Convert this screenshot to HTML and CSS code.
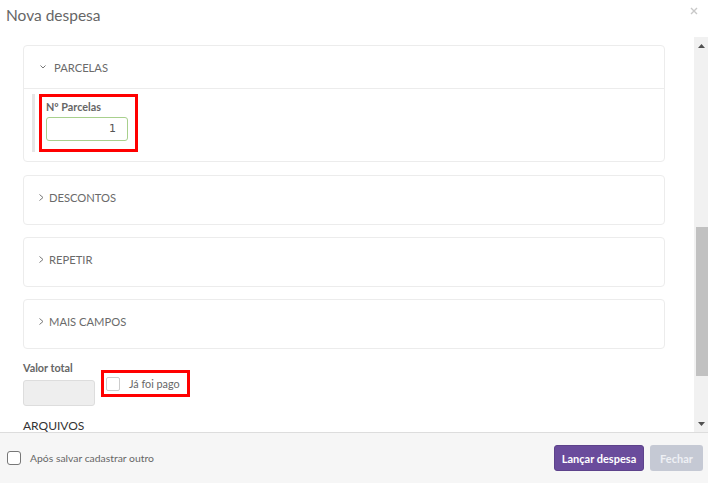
FILE: index.html
```
<!DOCTYPE html>
<html lang="pt">
<head>
<meta charset="utf-8">
<link rel="stylesheet" href="styles.css">
</head>
<body>
<div class="modal">
  <div class="modal-header">
    <h1 class="title">Nova despesa</h1>
    <svg class="close" width="8" height="8" viewBox="0 0 8 8"><path d="M1 1L7 7M7 1L1 7" stroke="#c8c8c8" stroke-width="1.4"/></svg>
  </div>
  <div class="modal-main">
    <div class="scroll-content">
      <div class="card card-open">
        <div class="card-head">
          <svg class="chev" width="6" height="4" viewBox="0 0 6 4"><polyline points="0.5,0.5 3,3 5.5,0.5" fill="none" stroke="#777" stroke-width="1"/></svg>
          <span class="card-title">PARCELAS</span>
        </div>
        <div class="card-body">
          <div class="field-wrap">
            <div class="highlight hl-parcelas">
              <label class="field-label">Nº Parcelas</label>
              <div class="input input-green">1</div>
            </div>
          </div>
        </div>
      </div>
      <div class="card">
        <div class="card-head card-head-closed">
          <svg class="chev" width="5" height="7" viewBox="0 0 5 7"><polyline points="0.5,0.5 4,3.5 0.5,6.5" fill="none" stroke="#777" stroke-width="1"/></svg>
          <span class="card-title">DESCONTOS</span>
        </div>
      </div>
      <div class="card">
        <div class="card-head card-head-closed">
          <svg class="chev" width="5" height="7" viewBox="0 0 5 7"><polyline points="0.5,0.5 4,3.5 0.5,6.5" fill="none" stroke="#777" stroke-width="1"/></svg>
          <span class="card-title">REPETIR</span>
        </div>
      </div>
      <div class="card">
        <div class="card-head card-head-closed">
          <svg class="chev" width="5" height="7" viewBox="0 0 5 7"><polyline points="0.5,0.5 4,3.5 0.5,6.5" fill="none" stroke="#777" stroke-width="1"/></svg>
          <span class="card-title">MAIS CAMPOS</span>
        </div>
      </div>
      <div class="total-row">
        <div class="total-group">
          <label class="field-label">Valor total</label>
          <div class="input input-disabled"></div>
        </div>
        <div class="highlight hl-pago">
          <span class="checkbox"></span>
          <span class="check-text">Já foi pago</span>
        </div>
      </div>
      <div class="section-title">ARQUIVOS</div>
    </div>
    <div class="scrollbar">
      <div class="sb-btn"><svg width="7" height="4" viewBox="0 0 7 4"><polygon points="0,4 3.5,0 7,4" fill="#505050"/></svg></div>
      <div class="sb-track">
        <div class="sb-space-top"></div>
        <div class="sb-thumb"></div>
      </div>
      <div class="sb-btn"><svg width="7" height="4" viewBox="0 0 7 4"><polygon points="0,0 7,0 3.5,4" fill="#505050"/></svg></div>
    </div>
  </div>
  <div class="modal-footer">
    <div class="footer-check">
      <span class="checkbox checkbox-dark"></span>
      <span class="footer-text">Após salvar cadastrar outro</span>
    </div>
    <div class="buttons">
      <button class="btn btn-primary">Lançar despesa</button>
      <button class="btn btn-disabled">Fechar</button>
    </div>
  </div>
</div>
</body>
</html>
```
FILE: styles.css
```
* { box-sizing: border-box; }
html, body { margin: 0; padding: 0; }
body {
  font-family: Lato, "Open Sans", sans-serif;
  background: #fff;
  width: 708px;
  height: 483px;
  overflow: hidden;
}
.modal {
  display: flex;
  flex-direction: column;
  height: 483px;
}
.modal-header {
  height: 37px;
  flex: none;
  display: flex;
  justify-content: space-between;
  align-items: flex-start;
  padding: 0 10px 0 6px;
}
.title {
  margin: 6px 0 0;
  font-size: 15.5px;
  font-weight: 400;
  color: #666;
  line-height: 18px;
}
.close { margin-top: 7px; }
.modal-main {
  height: 395px;
  flex: none;
  display: flex;
}
.scroll-content {
  flex: 1;
  overflow: hidden;
  padding: 8px 29px 0 23px;
}
.card {
  border: 1px solid #ececec;
  border-radius: 4px;
  margin-bottom: 12px;
}
.card-open { margin-bottom: 13px; }
.card-head {
  height: 43px;
  display: flex;
  align-items: center;
  padding-left: 16px;
  border-bottom: 1px solid #ececec;
}
.card-head-closed {
  height: 48px;
  border-bottom: none;
  padding-left: 15px;
  padding-bottom: 5px;
}
.chev { flex: none; }
.card-title {
  font-size: 11.2px;
  color: #6a6a6a;
  margin-left: 8px;
}
.card-head-closed .card-title { margin-left: 5px; }
.card-body {
  padding: 8px 8px 9px;
}
.field-wrap {
  border-left: 3px solid #e6e6e6;
  padding-left: 4px;
  height: 58px;
}
.highlight {
  border: 3px solid #f00;
}
.hl-parcelas {
  width: 99px;
  margin-top: -3px;
  padding: 3px 7px 8px 4px;
  display: flex;
  flex-direction: column;
  gap: 4px;
}
.field-label {
  font-size: 10.8px;
  font-weight: 700;
  color: #666;
  line-height: 13px;
  display: block;
}
.input {
  height: 24px;
  border-radius: 3px;
  font-size: 11px;
  color: #555;
  font-family: "DejaVu Sans", sans-serif;
}
.input-green {
  width: 82px;
  border: 1px solid #a8d08d;
  text-align: right;
  padding-right: 11px;
  line-height: 22px;
}
.total-row {
  display: flex;
  align-items: flex-start;
  margin-top: 12px;
}
.total-group {
  display: flex;
  flex-direction: column;
  gap: 6px;
}
.input-disabled {
  width: 72px;
  height: 26px;
  background: #eee;
  border: 1px solid #ddd;
}
.hl-pago {
  margin-left: 6px;
  margin-top: 9px;
  width: 89px;
  height: 27px;
  display: flex;
  align-items: center;
  padding-left: 2px;
}
.checkbox {
  width: 14px;
  height: 14px;
  border: 1px solid #ccc;
  border-radius: 2px;
  background: #fff;
  flex: none;
  display: inline-block;
}
.check-text {
  font-size: 10.8px;
  color: #666;
  margin-left: 9px;
  margin-top: -1px;
}
.section-title {
  margin-top: 12px;
  font-size: 12px;
  color: #333;
}
.scrollbar {
  width: 14px;
  flex: none;
  background: #f1f1f1;
  display: flex;
  flex-direction: column;
}
.sb-btn {
  height: 17px;
  display: flex;
  align-items: center;
  justify-content: center;
  padding-left: 1px;
  flex: none;
}
.sb-track {
  flex: 1;
  display: flex;
  flex-direction: column;
}
.sb-space-top { height: 173px; }
.sb-thumb {
  height: 149px;
  margin-left: 2px;
  background: #c1c1c1;
}
.modal-footer {
  flex: 1;
  background: #f6f6f6;
  border-top: 1px solid #ddd;
  display: flex;
  align-items: center;
  justify-content: space-between;
  padding: 0 5px 0 7px;
}
.footer-check {
  display: flex;
  align-items: center;
}
.checkbox-dark {
  border-color: #777;
  border-radius: 3px;
}
.footer-text {
  font-size: 10.4px;
  color: #666;
  margin-left: 9px;
}
.buttons {
  display: flex;
  gap: 6px;
}
.btn {
  height: 26px;
  border: none;
  border-radius: 3px;
  font-family: Lato, sans-serif;
  font-size: 11px;
  font-weight: 700;
  padding: 0;
}
.btn-primary {
  width: 90px;
  background: #6a4c9c;
  color: #fff;
  border: 1px solid #5d428b;
}
.btn-disabled {
  width: 53px;
  background: #c5c9d4;
  color: #eef0f4;
}
```
